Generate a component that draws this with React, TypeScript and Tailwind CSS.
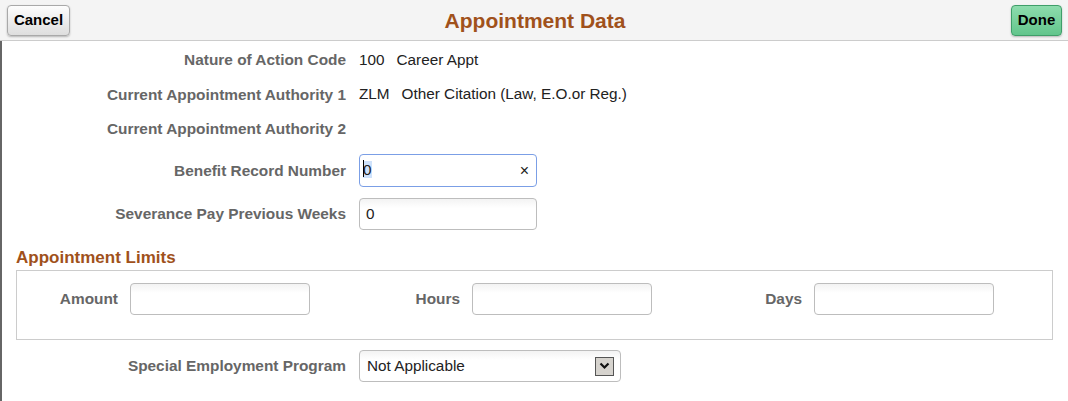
import React from 'react';

const labelCls = "w-[344px] shrink-0 text-right font-bold text-[15.4px] text-[#666]";
const inputCls = "h-[32px] rounded-[4px] border border-[#bdbdbd] bg-gradient-to-b from-[#f3f3f3] to-white to-[30%] px-[6px] text-[15.3px] text-[#222] flex items-center";

const Row: React.FC<{ label: string; className?: string; children?: React.ReactNode }> = ({ label, className, children }) => (
  <div className={"flex items-center " + (className ?? "")}>
    <div className={labelCls}>{label}</div>
    <div className="ml-[13px] flex items-center text-[15.3px] text-[#222]">{children}</div>
  </div>
);

const LimitField: React.FC<{ label: string }> = ({ label }) => (
  <div className="flex items-center">
    <div className="w-[101px] text-right font-bold text-[15.4px] text-[#666]">{label}</div>
    <div className={inputCls + " ml-[12px] w-[180px]"}></div>
  </div>
);

export default function App() {
  return (
    <div className="w-[1068px] h-[401px] overflow-hidden bg-white font-['Liberation_Sans',Arial,sans-serif]">
      {/* Header */}
      <div className="h-[41px] bg-[#f4f4f4] border-b border-[#cccccc] flex items-center justify-between pl-[7px] pr-[6px] relative">
        <button className="h-[31px] w-[63px] rounded-[4px] border border-[#a9a9a9] bg-gradient-to-b from-[#fdfdfd] to-[#dedede] shadow-[0_1px_2px_rgba(0,0,0,0.25)] text-[15px] font-bold text-black mt-[1px]">
          Cancel
        </button>
        <div className="absolute left-0 right-0 text-center pointer-events-none text-[21px] font-bold text-[#a0511b] leading-none">
          <span className="relative left-[1px]">Appointment Data</span>
        </div>
        <button className="h-[31px] w-[51px] rounded-[4px] border border-[#3f9e69] bg-gradient-to-b from-[#8ddcad] to-[#62c58c] shadow-[0_1px_2px_rgba(0,0,0,0.25)] text-[15px] font-bold text-black mt-[1px]">
          Done
        </button>
      </div>

      {/* Body */}
      <div className="border-l-2 border-[#666] h-[360px]">
        <Row label="Nature of Action Code" className="h-[36px] pt-[2px]">
          <span>100</span>
          <span className="ml-[12px]">Career Appt</span>
        </Row>
        <Row label="Current Appointment Authority 1" className="h-[35px]">
          <span>ZLM</span>
          <span className="ml-[12px]">Other Citation (Law, E.O.or Reg.)</span>
        </Row>
        <Row label="Current Appointment Authority 2" className="h-[34px]" />

        <Row label="Benefit Record Number" className="mt-[8px]">
          <div className="h-[33px] w-[178px] rounded-[4px] border border-[#7b9fe6] bg-white px-[3px] flex items-center justify-between text-[15.3px] text-[#222]">
            <span className="relative">
              <span className="absolute left-0 top-[1px] w-[1px] h-[17px] bg-black"></span>
              <span className="bg-[#cfe2fb]">0</span>
            </span>
            <span className="text-[16px] mr-[4px] leading-none">×</span>
          </div>
        </Row>
        <Row label="Severance Pay Previous Weeks" className="mt-[11px]">
          <div className={inputCls + " w-[178px] px-[4px]"}>0</div>
        </Row>

        {/* Appointment Limits */}
        <div className="mt-[18px] ml-[14px] text-[17px] font-bold text-[#a0511b] leading-[20px]">Appointment Limits</div>
        <div className="ml-[14px] mr-[15px] mt-[2px] border border-[#cccccc] pt-[12px] pb-[24px] grid grid-cols-[342px_342px_342px]">
          <LimitField label="Amount" />
          <LimitField label="Hours" />
          <LimitField label="Days" />
        </div>

        <Row label="Special Employment Program" className="mt-[10px]">
          <div className={inputCls + " w-[262px] pl-[7px] pr-[6px] justify-between"}>
            <span>Not Applicable</span>
            <span className="w-[19px] h-[19px] border border-[#555] bg-[#d6d3ce] flex items-center justify-center">
              <svg width="11" height="8" viewBox="0 0 11 8">
                <path d="M1.5 1.5 L5.5 5.5 L9.5 1.5" fill="none" stroke="#111" strokeWidth="2.2" />
              </svg>
            </span>
          </div>
        </Row>
      </div>
    </div>
  );
}
